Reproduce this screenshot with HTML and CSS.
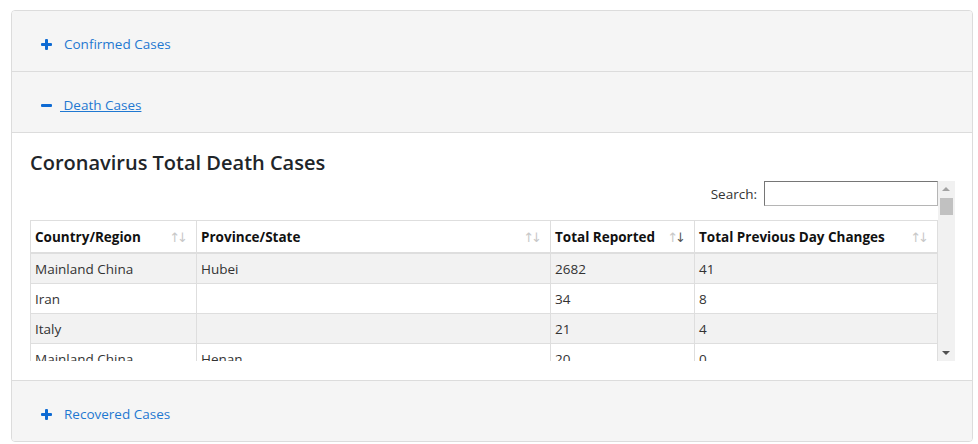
FILE: index.html
```html
<!DOCTYPE html>
<html>
<head>
<meta charset="utf-8">
<link rel="stylesheet" href="styles.css">
</head>
<body>
<div class="accordion">
  <div class="acc-head"><a class="acc-link"><span class="ico ico-plus"></span><span class="acc-text">Confirmed Cases</span></a></div>
  <div class="acc-head"><a class="acc-link open"><span class="ico ico-minus"></span><span class="acc-text under">&nbsp;Death Cases</span></a></div>
  <div class="acc-body">
    <h4 class="title">Coronavirus Total Death Cases</h4>
    <div class="scroll-wrap">
      <div class="scroll-view">
        <div class="search-row"><label class="search-label">Search:</label><input class="search-input" type="text"></div>
        <table class="grid">
          <colgroup>
            <col class="w1"><col class="w2"><col class="w3"><col class="w4">
          </colgroup>
          <thead>
            <tr>
              <th>Country/Region<span class="sort">↑↓</span></th>
              <th>Province/State<span class="sort">↑↓</span></th>
              <th>Total Reported<span class="sort"><span class="lt">↑</span><span class="dk">↓</span></span></th>
              <th>Total Previous Day Changes<span class="sort">↑↓</span></th>
            </tr>
          </thead>
          <tbody>
            <tr><td>Mainland China</td><td>Hubei</td><td>2682</td><td>41</td></tr>
            <tr><td>Iran</td><td></td><td>34</td><td>8</td></tr>
            <tr><td>Italy</td><td></td><td>21</td><td>4</td></tr>
            <tr><td>Mainland China</td><td>Henan</td><td>20</td><td>0</td></tr>
            <tr><td>Mainland China</td><td>Heilongjiang</td><td>12</td><td>0</td></tr>
            <tr><td>South Korea</td><td></td><td>11</td><td>3</td></tr>
            <tr><td>Mainland China</td><td>Beijing</td><td>8</td><td>0</td></tr>
            <tr><td>Mainland China</td><td>Guangdong</td><td>7</td><td>0</td></tr>
            <tr><td>Mainland China</td><td>Chongqing</td><td>6</td><td>0</td></tr>
            <tr><td>Mainland China</td><td>Hainan</td><td>6</td><td>0</td></tr>
            <tr><td>Mainland China</td><td>Hebei</td><td>6</td><td>0</td></tr>
            <tr><td>Mainland China</td><td>Shandong</td><td>6</td><td>0</td></tr>
            <tr><td>Mainland China</td><td>Anhui</td><td>6</td><td>0</td></tr>
            <tr><td>Others</td><td>Diamond Princess cruise ship</td><td>4</td><td>1</td></tr>
            <tr><td>Mainland China</td><td>Hunan</td><td>4</td><td>0</td></tr>
            <tr><td>Mainland China</td><td>Tianjin</td><td>3</td><td>0</td></tr>
            <tr><td>Mainland China</td><td>Sichuan</td><td>3</td><td>0</td></tr>
            <tr><td>Mainland China</td><td>Shanghai</td><td>3</td><td>0</td></tr>
            <tr><td>Hong Kong</td><td>Hong Kong</td><td>2</td><td>0</td></tr>
            <tr><td>Mainland China</td><td>Gansu</td><td>2</td><td>0</td></tr>
            <tr><td>Mainland China</td><td>Guangxi</td><td>2</td><td>0</td></tr>
            <tr><td>Mainland China</td><td>Guizhou</td><td>2</td><td>0</td></tr>
            <tr><td>Mainland China</td><td>Xinjiang</td><td>2</td><td>0</td></tr>
            <tr><td>Mainland China</td><td>Yunnan</td><td>2</td><td>0</td></tr>
            <tr><td>Mainland China</td><td>Jiangxi</td><td>1</td><td>0</td></tr>
            <tr><td>Mainland China</td><td>Fujian</td><td>1</td><td>0</td></tr>
            <tr><td>Mainland China</td><td>Jilin</td><td>1</td><td>0</td></tr>
            <tr><td>Mainland China</td><td>Shaanxi</td><td>1</td><td>0</td></tr>
            <tr><td>Mainland China</td><td>Zhejiang</td><td>1</td><td>0</td></tr>
            <tr><td>Mainland China</td><td>Liaoning</td><td>1</td><td>0</td></tr>
            <tr><td>Japan</td><td></td><td>1</td><td>0</td></tr>
            <tr><td>Taiwan</td><td>Taiwan</td><td>1</td><td>0</td></tr>
            <tr><td>Philippines</td><td></td><td>1</td><td>0</td></tr>
            <tr><td>France</td><td></td><td>1</td><td>0</td></tr>
            <tr><td>Mainland China</td><td>Inner Mongolia</td><td>0</td><td>0</td></tr>
            <tr><td>Mainland China</td><td>Ningxia</td><td>0</td><td>0</td></tr>
            <tr><td>Mainland China</td><td>Jiangsu</td><td>0</td><td>0</td></tr>
            <tr><td>Mainland China</td><td>Shanxi</td><td>0</td><td>0</td></tr>
            <tr><td>Mainland China</td><td>Qinghai</td><td>0</td><td>0</td></tr>
            <tr><td>Mainland China</td><td>Tibet</td><td>0</td><td>0</td></tr>
            <tr><td>Macau</td><td>Macau</td><td>0</td><td>0</td></tr>
            <tr><td>Singapore</td><td></td><td>0</td><td>0</td></tr>
            <tr><td>Thailand</td><td></td><td>0</td><td>0</td></tr>
            <tr><td>Germany</td><td></td><td>0</td><td>0</td></tr>
            <tr><td>Malaysia</td><td></td><td>0</td><td>0</td></tr>
          </tbody>
        </table>
      </div>
      <div class="vbar" aria-hidden="true">
        <span class="arrow up"></span>
        <span class="track"><span class="thumb"></span></span>
        <span class="arrow down"></span>
      </div>
    </div>
  </div>
  <div class="acc-head last"><a class="acc-link"><span class="ico ico-plus"></span><span class="acc-text">Recovered Cases</span></a></div>
</div>
</body>
</html>
```
FILE: styles.css
```css
html, body {
  margin: 0;
  padding: 0;
  background: #fff;
}
body {
  padding: 10px 5px 0 11px;
  font-family: "Open Sans", "Noto Sans", sans-serif;
  color: #212529;
}
.accordion {
  border: 1px solid #dcdcdc;
  border-radius: 4px;
  width: 960px;
  overflow: hidden;
}
.acc-head {
  height: 61px;
  background: #f5f5f5;
  border-bottom: 1px solid #dcdcdc;
  display: flex;
  align-items: center;
  padding: 6px 0 0 29px;
  box-sizing: border-box;
}
.acc-head.last {
  border-bottom: 0;
  height: 60px;
}
.acc-link {
  display: flex;
  align-items: center;
  color: #1f78d1;
  font-size: 13.5px;
  cursor: pointer;
}
.acc-text.under {
  text-decoration: underline;
}
.ico {
  position: relative;
  display: inline-block;
  width: 11px;
  height: 11px;
  margin-right: 12px;
}
.open .ico {
  margin-right: 8px;
}
.ico-plus::before, .ico-plus::after, .ico-minus::before {
  content: "";
  position: absolute;
  background: #0d6ad3;
  border-radius: 1px;
}
.ico-plus::before, .ico-minus::before {
  left: 0;
  top: 4px;
  width: 11px;
  height: 3px;
}
.ico-plus::after {
  left: 4px;
  top: 0;
  width: 3px;
  height: 11px;
}
.acc-body {
  background: #fff;
  border-bottom: 1px solid #dcdcdc;
  padding: 17px 17px 19px 18px;
}
.title {
  margin: 0 0 6px 0;
  font-size: 20px;
  line-height: 25px;
  font-weight: 600;
  color: #212529;
}
.scroll-wrap {
  display: flex;
  height: 180px;
}
.scroll-view {
  flex: 1;
  min-width: 0;
  overflow: hidden;
}
.vbar {
  width: 17px;
  flex: none;
  background: #f1f1f1;
  display: flex;
  flex-direction: column;
}
.arrow {
  height: 17px;
  flex: none;
  position: relative;
}
.arrow::before {
  content: "";
  position: absolute;
  left: 4px;
  width: 0;
  height: 0;
  border-left: 4px solid transparent;
  border-right: 4px solid transparent;
}
.arrow.up::before {
  top: 6px;
  border-bottom: 4px solid #a3a3a3;
}
.arrow.down::before {
  top: 7px;
  border-top: 4px solid #505050;
}
.track {
  flex: 1;
  display: block;
}
.thumb {
  display: block;
  margin: 0 2px;
  height: 17px;
  background: #c1c1c1;
}
.search-row {
  display: flex;
  justify-content: flex-end;
  align-items: center;
  height: 25px;
  margin-bottom: 14px;
}
.search-label {
  font-size: 13.5px;
  color: #333;
  margin-right: 7px;
}
.search-input {
  width: 174px;
  height: 25px;
  box-sizing: border-box;
  border: 1px solid #b5b5b5;
  border-top-color: #767676;
  border-left-color: #767676;
  padding: 0 4px;
  margin: 0;
}
.grid {
  width: 100%;
  table-layout: fixed;
  border-collapse: collapse;
  font-size: 13.5px;
  color: #333;
}
.w1 { width: 166px; }
.w2 { width: 354px; }
.w3 { width: 144px; }
.grid th {
  position: relative;
  text-align: left;
  font-weight: 700;
  height: 31px;
  padding: 0 20px 0 4px;
  border: 1px solid #dedede;
  border-bottom: 2px solid #dedede;
  color: #111;
  white-space: nowrap;
}
.grid td {
  height: 29px;
  padding: 0 4px;
  border: 1px solid #dedede;
  border-top: 0;
  white-space: nowrap;
}
.grid tbody tr:nth-child(odd) td {
  background: #f2f2f2;
}
.sort {
  position: absolute;
  right: 8px;
  top: 50%;
  transform: translateY(-50%);
  font-family: "DejaVu Sans", sans-serif;
  font-size: 13px;
  font-weight: 400;
  color: #c8c8c8;
  letter-spacing: -3px;
  padding-right: 3px;
}
.sort .dk { color: #555; }
.sort .lt { color: #c8c8c8; }
```
